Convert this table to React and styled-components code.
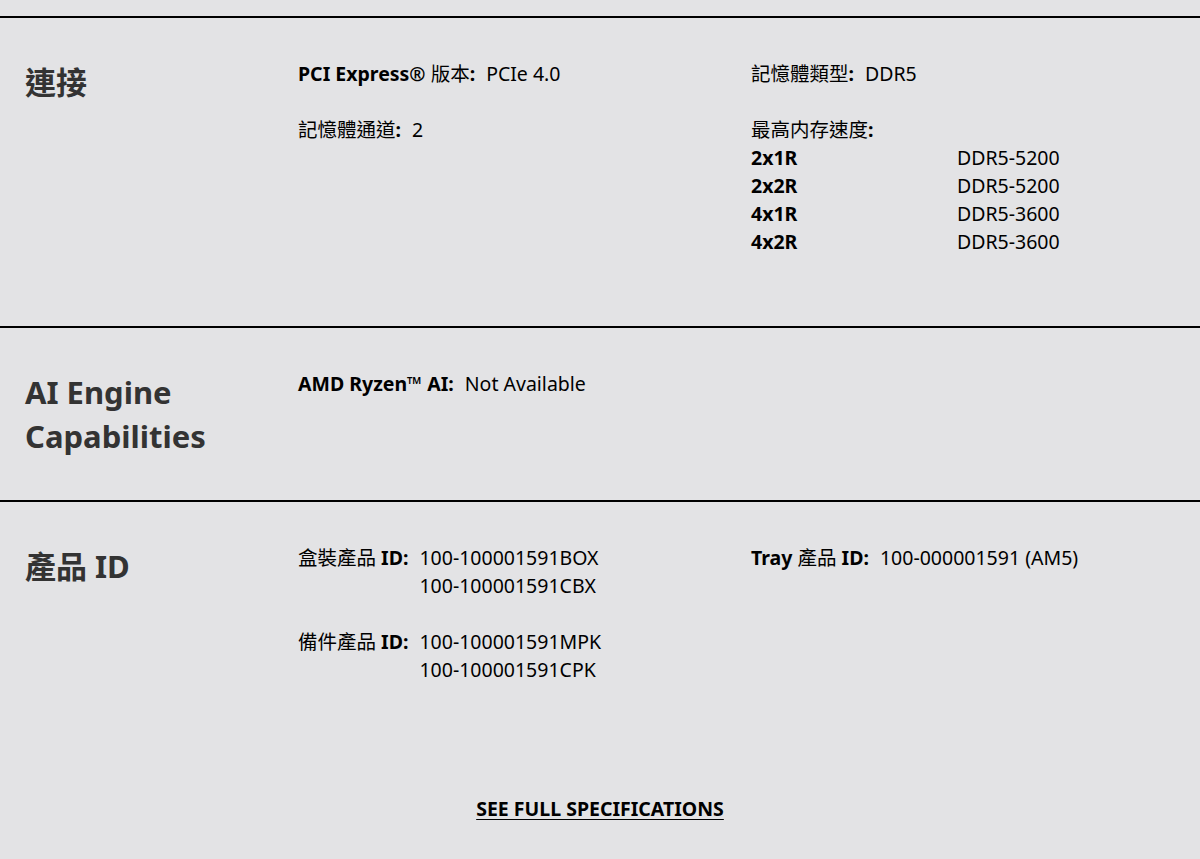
import React from "react";
import styled, { createGlobalStyle } from "styled-components";

const GlobalStyle = createGlobalStyle`
  body {
    margin: 0;
    background: #e3e3e5;
    font-family: "Noto Sans", "Noto Sans CJK TC", sans-serif;
    color: #000;
  }
`;

const Page = styled.div`
  padding-top: 16px;
  padding-bottom: 40px;
`;

const Section = styled.section`
  border-top: 2px solid #000;
  padding: 42px 0 42px 25px;
  display: grid;
  grid-template-columns: 273px 453px 1fr;
`;

const Heading = styled.h2`
  margin: 0;
  font-size: 31px;
  line-height: 44px;
  font-weight: 700;
  color: #333;
`;

const Column = styled.div``;

const Item = styled.div`
  display: flex;
  font-size: 19.5px;
  line-height: 28px;
  margin-bottom: 28px;
`;

const Label = styled.span`
  font-weight: 700;
  margin-right: 11px;
  white-space: nowrap;
`;

const Cjk = styled.span`
  font-weight: 400;
`;

const Values = styled.div`
  display: flex;
  flex-direction: column;
`;

const Block = styled.div`
  font-size: 19.5px;
  line-height: 28px;
  margin-bottom: 28px;
`;

const SpeedTable = styled.div`
  display: grid;
  grid-template-columns: 206px auto;
`;

const SpeedKey = styled.span`
  font-weight: 700;
`;

const Footer = styled.div`
  display: flex;
  justify-content: center;
  padding-top: 41px;
`;

const FullLink = styled.a`
  font-size: 19.5px;
  line-height: 28px;
  font-weight: 700;
  color: #000;
  text-decoration: underline;
  text-underline-offset: 3px;
`;

function Spec({ label, values }) {
  return (
    <Item>
      <Label>{label}</Label>
      <Values>
        {values.map((v) => (
          <span key={v}>{v}</span>
        ))}
      </Values>
    </Item>
  );
}

const speeds = [
  ["2x1R", "DDR5-5200"],
  ["2x2R", "DDR5-5200"],
  ["4x1R", "DDR5-3600"],
  ["4x2R", "DDR5-3600"],
];

export default function App() {
  return (
    <Page>
      <GlobalStyle />
      <Section>
        <Heading>連接</Heading>
        <Column>
          <Spec label={<>PCI Express® <Cjk>版本</Cjk>:</>} values={["PCIe 4.0"]} />
          <Spec label={<><Cjk>記憶體通道</Cjk>:</>} values={["2"]} />
        </Column>
        <Column>
          <Spec label={<><Cjk>記憶體類型</Cjk>:</>} values={["DDR5"]} />
          <Block>
            <Label><Cjk>最高内存速度</Cjk>:</Label>
            <SpeedTable>
              {speeds.map(([k, v]) => (
                <React.Fragment key={k}>
                  <SpeedKey>{k}</SpeedKey>
                  <span>{v}</span>
                </React.Fragment>
              ))}
            </SpeedTable>
          </Block>
        </Column>
      </Section>
      <Section>
        <Heading>AI Engine<br />Capabilities</Heading>
        <Column>
          <Spec label="AMD Ryzen™ AI:" values={["Not Available"]} />
        </Column>
        <Column />
      </Section>
      <Section>
        <Heading>產品 ID</Heading>
        <Column>
          <Spec
            label={<><Cjk>盒裝產品</Cjk> ID:</>}
            values={["100-100001591BOX", "100-100001591CBX"]}
          />
          <Spec
            label={<><Cjk>備件產品</Cjk> ID:</>}
            values={["100-100001591MPK", "100-100001591CPK"]}
          />
        </Column>
        <Column>
          <Spec label={<>Tray <Cjk>產品</Cjk> ID:</>} values={["100-000001591 (AM5)"]} />
        </Column>
      </Section>
      <Footer>
        <FullLink href="#">SEE FULL SPECIFICATIONS</FullLink>
      </Footer>
    </Page>
  );
}
